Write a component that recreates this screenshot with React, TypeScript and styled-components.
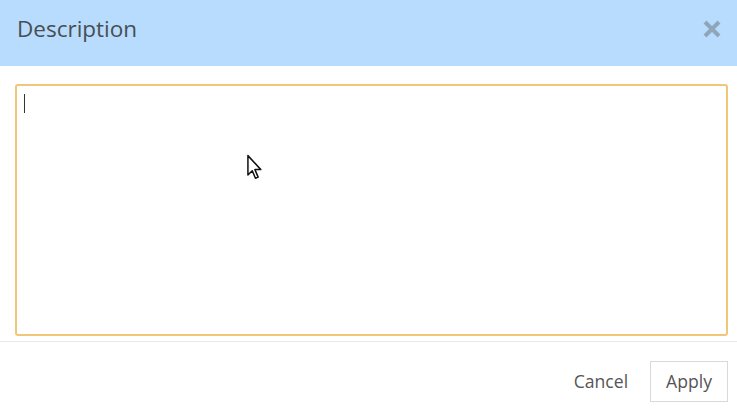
import React from "react";
import styled, { createGlobalStyle } from "styled-components";

const Global = createGlobalStyle`
  html, body { margin: 0; padding: 0; background: #ffffff; }
  body { font-family: "Open Sans", "Liberation Sans", sans-serif; }
`;

const Dialog = styled.div`
  position: relative;
  width: 737px;
  height: 410px;
  display: flex;
  flex-direction: column;
  background: #ffffff;
  overflow: hidden;
`;

const Header = styled.div`
  height: 66px;
  flex: none;
  display: flex;
  align-items: center;
  justify-content: space-between;
  padding: 0 15px 0 17px;
  background: #b7dcfd;
  box-sizing: border-box;
`;

const Title = styled.h2`
  margin: 0;
  font-size: 22.5px;
  font-weight: 400;
  color: #494e53;
  line-height: 1;
  padding-bottom: 8px;
`;

const CloseButton = styled.button`
  border: 0;
  background: transparent;
  padding: 0;
  width: 20px;
  height: 20px;
  display: flex;
  align-items: center;
  justify-content: center;
  margin-top: -8px;
  cursor: pointer;
`;

const Body = styled.div`
  flex: none;
  padding: 18px 9px 5px 15px;
`;

const Editor = styled.div`
  height: 252px;
  box-sizing: border-box;
  border: 2px solid #f2c678;
  border-radius: 3px;
  padding: 8px 7px;
  background: #fff;
`;

const Caret = styled.span`
  display: block;
  width: 1px;
  height: 19px;
  background: #333;
`;

const Footer = styled.div`
  flex: 1;
  border-top: 1px solid #e8e8e8;
  display: flex;
  justify-content: flex-end;
  align-items: flex-start;
  gap: 22px;
  padding: 19px 9px 0 0;
`;

const TextButton = styled.button<{ $outlined?: boolean }>`
  font-family: "Open Sans", "Liberation Sans", sans-serif;
  font-size: 17.6px;
  color: #555;
  background: #fff;
  height: 41px;
  box-sizing: border-box;
  padding: ${(p) => (p.$outlined ? "0 15px" : "0")};
  border: ${(p) => (p.$outlined ? "1px solid #d9d9d9" : "0")};
  border-radius: 0;
  cursor: pointer;
  line-height: 1;
`;

const Pointer = styled.svg`
  position: absolute;
  left: 246px;
  top: 154px;
`;

export default function App() {
  return (
    <>
      <Global />
      <Dialog>
        <Header>
          <Title>Description</Title>
          <CloseButton aria-label="Close">
            <svg width="20" height="20" viewBox="0 0 20 20">
              <path d="M3 3 L17 17 M17 3 L3 17" stroke="#8fa6ba" strokeWidth="4" strokeLinecap="butt" />
            </svg>
          </CloseButton>
        </Header>
        <Body>
          <Editor>
            <Caret />
          </Editor>
        </Body>
        <Footer>
          <TextButton>Cancel</TextButton>
          <TextButton $outlined>Apply</TextButton>
        </Footer>
        <Pointer width="20" height="28" viewBox="0 0 18 26">
          <path d="M1.5 1.5 L1.5 19.5 L5.5 15.5 L8.5 22.5 L11 21.5 L8 14.5 L13.5 14.5 Z" fill="#fff" stroke="#111" strokeWidth="1.4" strokeLinejoin="round" />
        </Pointer>
      </Dialog>
    </>
  );
}
